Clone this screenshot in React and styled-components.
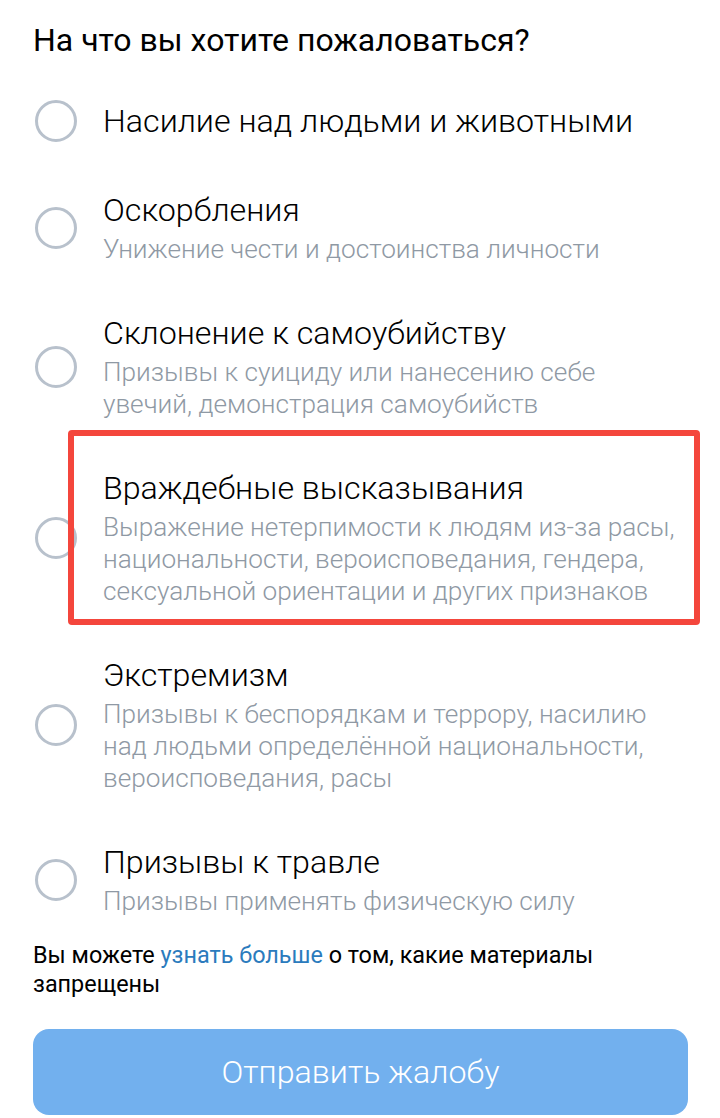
import React, { useState } from 'react';
import styled, { createGlobalStyle } from 'styled-components';

const GlobalStyle = createGlobalStyle`
  html, body {
    margin: 0;
    padding: 0;
    background: #ffffff;
  }
  body {
    font-family: Roboto, "Noto Sans", "Liberation Sans", sans-serif;
    -webkit-font-smoothing: antialiased;
  }
`;

const Screen = styled.div`
  width: 720px;
  height: 1118px;
  overflow: hidden;
  box-sizing: border-box;
  padding: 23px 32px 0 33px;
  display: flex;
  flex-direction: column;
`;

const Heading = styled.h1`
  margin: 0 0 18px;
  font-size: 32px;
  line-height: 34px;
  font-weight: 400;
  color: #000000;
`;

const List = styled.div`
  display: flex;
  flex-direction: column;
`;

const Item = styled.label`
  position: relative;
  display: flex;
  align-items: center;
  gap: 26px;
  padding: 25px 0 24px;
  cursor: pointer;

  ${({ $marked }) =>
    $marked &&
    `
    &::after {
      content: '';
      position: absolute;
      left: 35px;
      right: -12px;
      top: -14px;
      bottom: 6px;
      border: 6px solid #f4463c;
      border-radius: 4px;
      pointer-events: none;
    }
  `}
`;

const Radio = styled.span`
  flex: 0 0 auto;
  width: 36px;
  height: 36px;
  border-radius: 50%;
  border: 3px solid ${({ $checked }) => ($checked ? '#4986cc' : '#b8c1cc')};
  margin-left: 2px;
  box-sizing: content-box;
`;

const Texts = styled.div`
  display: flex;
  flex-direction: column;
  min-width: 0;
`;

const Title = styled.div`
  font-size: 32.2px;
  line-height: 38px;
  font-weight: 300;
  color: #000000;
`;

const Subtitle = styled.div`
  margin-top: 4px;
  font-size: 26.2px;
  line-height: 32px;
  font-weight: 300;
  color: #8f99a4;
`;

const Note = styled.p`
  margin: 0;
  font-size: 23.4px;
  line-height: 29px;
  font-weight: 400;
  color: #000000;
`;

const Link = styled.a`
  color: #2b7bbd;
  text-decoration: none;
`;

const SubmitButton = styled.button`
  margin-top: 30px;
  width: 655px;
  height: 86px;
  flex: 0 0 auto;
  border: none;
  border-radius: 16px;
  background: #72b0ee;
  color: #ffffff;
  font-family: inherit;
  font-size: 32.2px;
  font-weight: 300;
  cursor: pointer;
`;

const reasons = [
  { title: 'Насилие над людьми и животными' },
  { title: 'Оскорбления', sub: 'Унижение чести и достоинства личности' },
  {
    title: 'Склонение к самоубийству',
    sub: 'Призывы к суициду или нанесению себе увечий, демонстрация самоубийств',
  },
  {
    title: 'Враждебные высказывания',
    sub: 'Выражение нетерпимости к людям из-за расы, национальности, вероисповедания, гендера, сексуальной ориентации и других признаков',
    marked: true,
  },
  {
    title: 'Экстремизм',
    sub: 'Призывы к беспорядкам и террору, насилию над людьми определённой национальности, вероисповедания, расы',
  },
  { title: 'Призывы к травле', sub: 'Призывы применять физическую силу' },
];

export default function App() {
  const [selected, setSelected] = useState(null);

  return (
    <>
      <GlobalStyle />
      <Screen>
        <Heading>На что вы хотите пожаловаться?</Heading>
        <List>
          {reasons.map((r, i) => (
            <Item key={r.title} $marked={r.marked} onClick={() => setSelected(i)}>
              <Radio $checked={selected === i} />
              <Texts>
                <Title>{r.title}</Title>
                {r.sub && <Subtitle>{r.sub}</Subtitle>}
              </Texts>
            </Item>
          ))}
        </List>
        <Note>
          Вы можете <Link href="#">узнать больше</Link> о том, какие материалы запрещены
        </Note>
        <SubmitButton>Отправить жалобу</SubmitButton>
      </Screen>
    </>
  );
}
